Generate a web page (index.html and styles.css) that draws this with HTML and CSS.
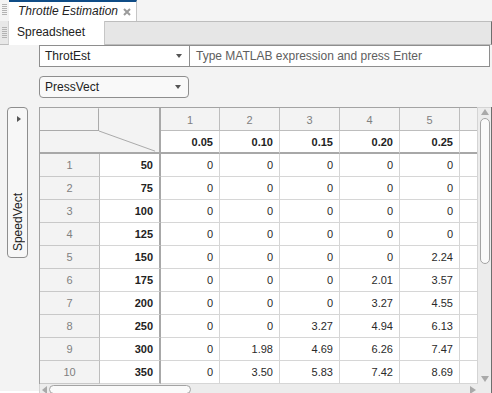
FILE: index.html
```html
<!DOCTYPE html>
<html>
<head>
<meta charset="utf-8">
<title>Throttle Estimation</title>
<link rel="stylesheet" href="styles.css">
</head>
<body>
<div class="app">
  <div class="docbar">
    <div class="grip"><div class="grip-lines"></div></div>
    <div class="doctab">
      <span class="doctitle">Throttle Estimation</span>
      <svg class="close" width="8" height="8" viewBox="0 0 8 8"><path d="M1 1 L7 7 M7 1 L1 7" stroke="#9b9b9b" stroke-width="2"/></svg>
    </div>
    <div class="docfill"></div>
  </div>
  <div class="subbar">
    <div class="grip grip-box"><div class="grip-lines"></div></div>
    <div class="subtab">Spreadsheet</div>
    <div class="subfill"></div>
  </div>
  <div class="content">
    <div class="exprrow">
      <div class="combo"><span>ThrotEst</span><span class="caret"></span></div>
      <div class="expr">Type MATLAB expression and press Enter</div>
    </div>
    <div class="pressrow">
      <div class="combo combo-round"><span>PressVect</span><span class="caret"></span></div>
    </div>
    <div class="mainrow">
      <div class="sidebtn"><span class="sidearrow"></span><span class="sidetext">SpeedVect</span></div>
      <div class="tablearea">
        <div class="viewport">
          <div class="sheet">
            <div class="cornerbox">
              <svg width="121" height="45" viewBox="0 0 121 45"><path d="M0 22.5 H60 M59.5 0 V23 M60 23 L117 43.5" stroke="#a8a8a8" stroke-width="1" fill="none"/></svg>
            </div>
            <div class="ch">1</div><div class="ch">2</div><div class="ch">3</div><div class="ch">4</div><div class="ch">5</div><div class="ch"></div>
            <div class="cv">0.05</div><div class="cv">0.10</div><div class="cv">0.15</div><div class="cv">0.20</div><div class="cv">0.25</div><div class="cv"></div>

            <div class="rn">1</div><div class="rv">50</div><div class="d">0</div><div class="d">0</div><div class="d">0</div><div class="d">0</div><div class="d">0</div><div class="d"></div>
            <div class="rn">2</div><div class="rv">75</div><div class="d">0</div><div class="d">0</div><div class="d">0</div><div class="d">0</div><div class="d">0</div><div class="d"></div>
            <div class="rn">3</div><div class="rv">100</div><div class="d">0</div><div class="d">0</div><div class="d">0</div><div class="d">0</div><div class="d">0</div><div class="d"></div>
            <div class="rn">4</div><div class="rv">125</div><div class="d">0</div><div class="d">0</div><div class="d">0</div><div class="d">0</div><div class="d">0</div><div class="d"></div>
            <div class="rn">5</div><div class="rv">150</div><div class="d">0</div><div class="d">0</div><div class="d">0</div><div class="d">0</div><div class="d">2.24</div><div class="d"></div>
            <div class="rn">6</div><div class="rv">175</div><div class="d">0</div><div class="d">0</div><div class="d">0</div><div class="d">2.01</div><div class="d">3.57</div><div class="d"></div>
            <div class="rn">7</div><div class="rv">200</div><div class="d">0</div><div class="d">0</div><div class="d">0</div><div class="d">3.27</div><div class="d">4.55</div><div class="d"></div>
            <div class="rn">8</div><div class="rv">250</div><div class="d">0</div><div class="d">0</div><div class="d">3.27</div><div class="d">4.94</div><div class="d">6.13</div><div class="d"></div>
            <div class="rn">9</div><div class="rv">300</div><div class="d">0</div><div class="d">1.98</div><div class="d">4.69</div><div class="d">6.26</div><div class="d">7.47</div><div class="d"></div>
            <div class="rn">10</div><div class="rv">350</div><div class="d">0</div><div class="d">3.50</div><div class="d">5.83</div><div class="d">7.42</div><div class="d">8.69</div><div class="d"></div>
          </div>
        </div>
        <div class="vscroll">
          <span class="arr arr-up"></span>
          <span class="vthumb"></span>
          <span class="vspace"></span>
          <span class="arr arr-down"></span>
        </div>
        <div class="hscroll">
          <span class="arr arr-left"></span>
          <span class="hthumb"></span>
          <span class="hspace"></span>
          <span class="arr arr-right"></span>
        </div>
        <div class="scorner"></div>
      </div>
    </div>
  </div>
</div>
</body>
</html>
```

FILE: styles.css
```css
* { box-sizing: border-box; }
html, body { margin: 0; padding: 0; }
body {
  width: 492px;
  height: 393px;
  overflow: hidden;
  background: #ffffff;
  font-family: "Liberation Sans", Arial, sans-serif;
  font-size: 12px;
  color: #222;
}
.app {
  width: 492px;
  height: 391px;
  background: #f3f3f3;
  display: flex;
  flex-direction: column;
}

/* document tab bar */
.docbar {
  height: 21px;
  display: flex;
  flex: none;
  background: #f4f4f4;
}
.grip {
  width: 9px;
  flex: none;
  padding: 4px 2px 0 2px;
}
.grip-lines {
  width: 5px;
  height: 12px;
  background: repeating-linear-gradient(to bottom, #b3b3b3 0 1px, transparent 1px 2px);
}
.grip-box {
  background: #e8e8e8;
  border-right: 1px solid #d2d2d2;
  padding-top: 6px;
}
.doctab {
  width: 128px;
  flex: none;
  background: #fff;
  border-top: 2px solid #0f4c86;
  border-right: 1px solid #c6c6c6;
  display: flex;
  align-items: center;
  padding-left: 9px;
  padding-bottom: 1px;
}
.doctitle {
  font-style: italic;
  font-size: 12px;
  color: #222;
  flex: 1;
}
.close { margin-right: 5px; margin-top: 1px; }
.docfill { flex: 1; }

/* sub bar */
.subbar {
  height: 24px;
  display: flex;
  flex: none;
}
.subtab {
  width: 96px;
  flex: none;
  background: #fff;
  border-right: 1px solid #c6c6c6;
  padding-left: 8px;
  padding-top: 4px;
  font-size: 12px;
  color: #222;
}
.subfill {
  flex: 1;
  background: #e6e6e6;
  border-top: 1px solid #bdbdbd;
  border-bottom: 1px solid #bdbdbd;
  border-right: 1px solid #6e6e6e;
}
.subbar .grip-box { border-bottom: 1px solid #bdbdbd; }

/* content */
.content {
  flex: 1;
  display: flex;
  flex-direction: column;
  border-bottom: 1px solid #6c6c6c;
}
.exprrow {
  display: flex;
  margin-left: 39px;
  height: 22px;
  flex: none;
}
.combo {
  width: 151px;
  height: 22px;
  border: 1px solid #8e8e8e;
  background: #fff;
  display: flex;
  align-items: center;
  justify-content: space-between;
  padding: 0 7px 0 5px;
}
.caret {
  width: 0;
  height: 0;
  border-top: 4px solid #555;
  border-left: 3.5px solid transparent;
  border-right: 3.5px solid transparent;
}
.expr {
  width: 300px;
  height: 22px;
  border: 1px solid #8e8e8e;
  border-left: none;
  background: #fff;
  color: #5e5e5e;
  padding-left: 6px;
  display: flex;
  align-items: center;
}
.pressrow {
  margin: 9px 0 0 39px;
  flex: none;
}
.combo-round {
  width: 150px;
  border-radius: 4px;
  background: #f9f9f9;
}

.mainrow {
  margin-top: 9px;
  flex: 1;
  display: flex;
  min-height: 0;
}
.sidebtn {
  margin-left: 7px;
  width: 21px;
  height: 151px;
  border: 1px solid #8e8e8e;
  border-radius: 4px;
  background: #f7f7f7;
  display: flex;
  flex-direction: column;
  align-items: center;
  justify-content: space-between;
  padding: 8px 0 6px 0;
}
.sidearrow {
  width: 0;
  height: 0;
  border-left: 4px solid #555;
  border-top: 3px solid transparent;
  border-bottom: 3px solid transparent;
  margin-left: 2px;
}
.sidetext {
  writing-mode: vertical-rl;
  transform: rotate(180deg);
  font-size: 12px;
  color: #222;
  line-height: 14px;
}

.tablearea {
  margin-left: 11px;
  width: 453px;
  display: grid;
  grid-template-columns: 1fr 14px;
  grid-template-rows: 1fr 11px;
  border-right: 1px solid #6e6e6e;
}
.viewport {
  overflow: hidden;
  background: #fff;
  border-left: 1px solid #a3a3a3;
  border-top: 1px solid #a3a3a3;
}
.sheet {
  display: grid;
  grid-template-columns: 60px 61px 59px 60px 60px 60px 60px 60px;
  grid-auto-rows: 23px;
  font-size: 11px;
}
.sheet > div {
  border-right: 1px solid #d6d6d6;
  border-bottom: 1px solid #d6d6d6;
  display: flex;
  align-items: center;
  white-space: nowrap;
  overflow: hidden;
}
.sheet > .cornerbox {
  grid-column: 1 / span 2;
  grid-row: 1 / span 2;
  background: #f3f3f3;
  border-right: 2px solid #a8a8a8;
  border-bottom: 2px solid #a8a8a8;
  align-items: flex-start;
}
.sheet > .ch {
  background: #f3f3f3;
  border-right-color: #bdbdbd;
  border-bottom-color: #bdbdbd;
  justify-content: center;
  color: #808080;
  padding-top: 1px;
}
.sheet > .cv {
  border-bottom: 2px solid #a8a8a8;
  border-right-color: #d6d6d6;
  justify-content: flex-end;
  padding-right: 6px;
  font-weight: bold;
  color: #222;
}
.sheet > .rn {
  background: #f3f3f3;
  border-right-color: #bdbdbd;
  border-bottom-color: #c8c8c8;
  justify-content: center;
  color: #808080;
}
.sheet > .rv {
  border-right: 2px solid #a8a8a8;
  justify-content: flex-end;
  padding-right: 6px;
  font-weight: bold;
  color: #222;
}
.sheet > .d {
  justify-content: flex-end;
  padding-right: 6px;
  color: #2a2a2a;
}

/* scrollbars */
.vscroll {
  background: #ececec;
  border-left: 1px solid #d4d4d4;
  border-top: 1px solid #d4d4d4;
  display: flex;
  flex-direction: column;
  align-items: center;
  padding: 1px 0 2px 0;
}
.arr { width: 0; height: 0; display: block; flex: none; }
.arr-up {
  border-bottom: 6px solid #a9a9a9;
  border-left: 4px solid transparent;
  border-right: 4px solid transparent;
}
.arr-down {
  border-top: 6px solid #a9a9a9;
  border-left: 4px solid transparent;
  border-right: 4px solid transparent;
}
.arr-left {
  border-right: 5px solid #a9a9a9;
  border-top: 4px solid transparent;
  border-bottom: 4px solid transparent;
}
.arr-right {
  border-left: 6px solid #a9a9a9;
  border-top: 4px solid transparent;
  border-bottom: 4px solid transparent;
}
.vthumb {
  display: block;
  margin-top: 3px;
  width: 10px;
  height: 146px;
  border: 1px solid #a3a3a3;
  border-radius: 5px;
  background: #fafafa;
}
.vspace, .hspace { flex: 1; display: block; }
.hscroll {
  background: #ececec;
  border-left: 1px solid #d4d4d4;
  display: flex;
  align-items: center;
  padding: 0 1px 0 2px;
}
.hthumb {
  display: block;
  margin-left: 2px;
  width: 142px;
  height: 9px;
  border: 1px solid #a3a3a3;
  border-radius: 5px;
  background: #fafafa;
}
.scorner { background: #ececec; }
```
